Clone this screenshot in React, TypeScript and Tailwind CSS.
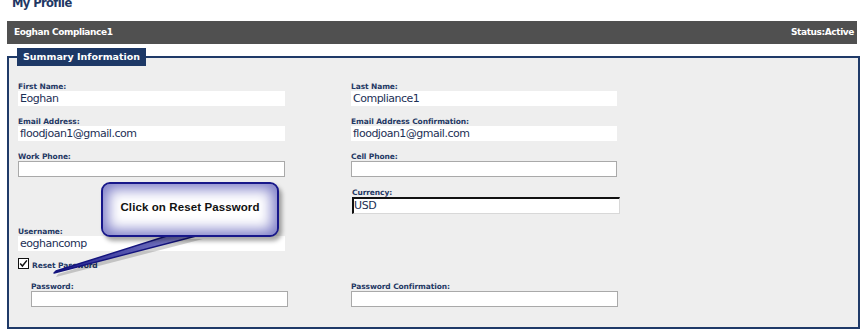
import React from "react";

const labelCls =
  "block h-[9px] text-[7.5px] leading-[9px] font-bold text-[#1f3864] tracking-[-0.1px] whitespace-nowrap";
const valueCls =
  "block h-[15px] bg-white text-[11px] leading-[15px] pl-[2px] text-[#1c2f55] tracking-[-0.5px] whitespace-nowrap";

function Field({
  label,
  value,
  boxed,
  className = "",
}: {
  label: string;
  value?: string;
  boxed?: boolean;
  className?: string;
}) {
  return (
    <div className={className}>
      <span className={labelCls}>{label}</span>
      <div
        className={
          boxed
            ? "h-[16px] bg-white border border-[#a9a9a9]"
            : valueCls
        }
      >
        {value}
      </div>
    </div>
  );
}

function Callout() {
  return (
    <>
      <svg
        className="absolute left-0 top-0 pointer-events-none"
        width="864"
        height="330"
      >
        <defs>
          <linearGradient id="tail" x1="0" y1="0" x2="1" y2="0">
            <stop offset="0" stopColor="#1b1b8a" />
            <stop offset="1" stopColor="#8c8cd0" />
          </linearGradient>
        </defs>
        <polygon
          points="172,236 56,271 54,274 201,236"
          fill="rgba(0,0,0,0.18)"
          transform="translate(2,3)"
        />
        <polygon
          points="170,235 56,271 54,273 200,235"
          fill="url(#tail)"
          stroke="#14147e"
          strokeWidth="1.4"
          strokeLinejoin="round"
        />
      </svg>
      <div className="absolute left-[101px] top-[182px] w-[178px] h-[55px] rounded-[9px] border-2 border-[#17178a] bg-white shadow-[inset_0_0_14px_5px_#7b7bc6,3px_4px_4px_rgba(0,0,0,0.35)] flex items-center justify-center pb-[3px]">
        <span className="font-['Liberation_Sans',Arial,sans-serif] font-bold text-[11.5px] text-[#111] tracking-[0.1px]">
          Click on Reset Password
        </span>
      </div>
    </>
  );
}

export default function App() {
  return (
    <div className="relative w-[864px] h-[330px] overflow-hidden bg-white font-['DejaVu_Sans',Verdana,sans-serif]">
      <div className="flex h-[21px] pl-[12px] overflow-hidden">
        <div className="-mt-[5px] text-[11.5px] font-bold text-[#1f3864] tracking-[-0.6px] leading-[16px]">
          My Profile
        </div>
      </div>

      <div className="mx-[7px] h-[23px] bg-[#505050] flex items-center justify-between pl-[7px] pr-[3px] text-white font-bold text-[9px] tracking-[-0.4px]">
        <span>Eoghan Compliance1</span>
        <span>Status:Active</span>
      </div>

      <fieldset className="ml-[7px] mt-[4px] w-[853px] border-2 border-[#1f3a68] bg-[#eeeeee] px-[9px] pb-[20px]">
        <legend className="-ml-[1px] h-[18px] px-[6px] bg-[#1d3866] text-white font-bold text-[9.5px] leading-[18px]">
          Summary Information
        </legend>

        <div className="pt-[16px] flex flex-col">
          <div className="flex gap-[66px]">
            <Field className="w-[267px]" label="First Name:" value="Eoghan" />
            <Field className="w-[266px]" label="Last Name:" value="Compliance1" />
          </div>
          <div className="flex gap-[66px] mt-[11px]">
            <Field
              className="w-[267px]"
              label="Email Address:"
              value="floodjoan1@gmail.com"
            />
            <Field
              className="w-[266px]"
              label="Email Address Confirmation:"
              value="floodjoan1@gmail.com"
            />
          </div>
          <div className="flex gap-[66px] mt-[11px]">
            <Field className="w-[267px]" label="Work Phone:" boxed />
            <Field className="w-[266px]" label="Cell Phone:" boxed />
          </div>
          <div className="flex gap-[66px] mt-[11px]">
            <div className="w-[267px]" />
            <div className="w-[268px] ml-[1px]">
              <span className={labelCls}>Currency:</span>
              <div className="h-[17px] bg-white border-t-2 border-l-2 border-t-[#111] border-l-[#111] border-r border-b border-r-[#d8d8d8] border-b-[#d8d8d8] text-[11px] leading-[14px] text-[#1c2f55] tracking-[-0.4px]">
                USD
              </div>
            </div>
          </div>
          <div className="flex gap-[66px] mt-[13px]">
            <Field className="w-[267px]" label="Username:" value="eoghancomp" />
          </div>
          <div className="flex items-center mt-[6px] h-[12px]">
            <span className="w-[11px] h-[11px] border border-[#111] bg-white flex items-center justify-center">
              <svg width="9" height="9" viewBox="0 0 9 9">
                <path
                  d="M1.2 4.6 L3.4 7 L7.9 1.4"
                  fill="none"
                  stroke="#111"
                  strokeWidth="1.5"
                />
              </svg>
            </span>
            <span className="ml-[3px] mt-[5px] text-[7.5px] font-bold text-[#1f3864] tracking-[-0.1px]">
              Reset Password
            </span>
          </div>
          <div className="flex mt-[13px]">
            <Field className="w-[257px] ml-[13px]" label="Password:" boxed />
            <Field
              className="w-[267px] ml-[63px]"
              label="Password Confirmation:"
              boxed
            />
          </div>
        </div>
      </fieldset>

      <Callout />
    </div>
  );
}
